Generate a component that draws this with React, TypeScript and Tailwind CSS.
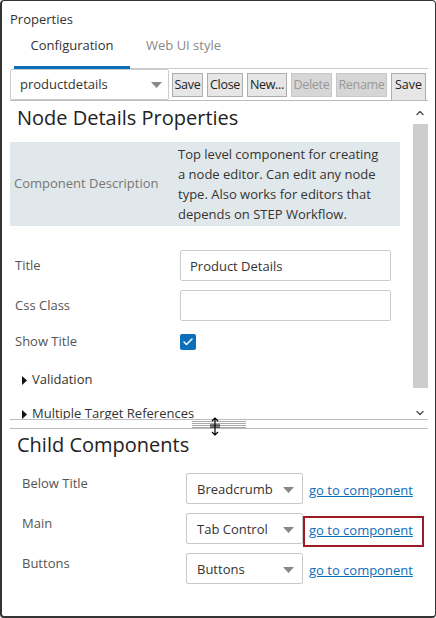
import { Check, ChevronDown, ChevronUp } from 'lucide-react'

const font = { fontFamily: '"Open Sans", "Noto Sans", sans-serif' }

function Caret() {
  return (
    <svg width="11" height="6" viewBox="0 0 11 6" className="shrink-0">
      <path d="M0 0 L11 0 L5.5 6 Z" fill="#888" />
    </svg>
  )
}

function ToolButton({ label, width, disabled }: { label: string; width: string; disabled?: boolean }) {
  return (
    <button
      className={
        (disabled
          ? 'border-[#c8c8c8] bg-[#d6d6d6] text-[#999] '
          : 'border-[#adadad] bg-[#e6e6e6] text-[#222] ') +
        width +
        ' h-[24px] border text-[12.5px] leading-[20px] whitespace-nowrap overflow-hidden tracking-[-0.3px] flex items-center justify-center'
      }
    >
      {label}
    </button>
  )
}

function ChildRow({ label, value, boxed }: { label: string; value: string; boxed?: boolean }) {
  return (
    <div className="flex items-start h-[40px]">
      <div className="w-[168px] pl-[4px] pt-[1px] text-[13px] text-[#555] leading-[18px]">{label}</div>
      <div className="w-[117px] h-[31px] border border-[#c8c8c8] rounded-[2px] bg-white flex items-center justify-between pl-[10px] pr-[8px] pt-[2px]">
        <span className="text-[13px] text-[#333]">{value}</span>
        <Caret />
      </div>
      <div
        className={
          boxed
            ? 'mt-[3px] h-[31px] w-[121px] border-2 border-[#9b1c25] flex items-center pl-[4px] pb-[3px]'
            : 'mt-[3px] h-[31px] w-[121px] border-2 border-transparent flex items-center pl-[4px] pb-[3px]'
        }
      >
        <a className="text-[13px] text-[#0a6eb8] underline leading-[16px]">go to component</a>
      </div>
    </div>
  )
}

export default function App() {
  return (
    <div className="w-[436px] h-[618px] bg-white" style={font}>
      <div className="w-full h-full border border-[#333] border-l-2 border-b-2 rounded-[4px] flex flex-col overflow-hidden">
        <div className="pl-[8px] pt-[9px] text-[13px] text-[#333] leading-[18px]">Properties</div>

        <div className="flex mt-[6px] pl-[12px]">
          <div className="w-[116px] h-[35px] flex items-start justify-center pt-[2px] text-[13px] text-[#333] border-b-[3px] border-[#0a6eb8]">
            Configuration
          </div>
          <div className="flex-1 h-[35px] flex items-start pt-[2px] pl-[16px] text-[13px] text-[#888] border-b border-[#ccc] mr-[7px]">
            Web UI style
          </div>
        </div>

        <div className="flex items-start h-[32px] ml-[8px] mr-[7px] border-b border-[#bbb] overflow-hidden">
          <div className="w-[159px] h-[31px] border border-[#ccc] rounded-[2px] flex items-center justify-between pl-[9px] pr-[6px] shrink-0">
            <span className="text-[13px] text-[#333]">productdetails</span>
            <Caret />
          </div>
          <div className="flex items-start gap-[4px] ml-[3px] mt-[4px]">
            <ToolButton label="Save" width="w-[31px]" />
            <ToolButton label="Close" width="w-[36px]" />
            <ToolButton label="New..." width="w-[40px]" />
            <ToolButton label="Delete" width="w-[41px]" disabled />
            <ToolButton label="Rename" width="w-[51px]" disabled />
            <button className="w-[35px] h-[44px] border border-[#adadad] bg-[#e6e6e6] text-[#222] text-[12.5px] leading-[20px] self-start">
              Save As
            </button>
          </div>
        </div>

        <div className="flex h-[318px] ml-[8px] mr-[7px]">
          <div className="flex-1 overflow-hidden">
            <div className="pl-[7px] pt-[3px] text-[20px] text-[#222] leading-[28px]">Node Details Properties</div>
            <div className="mt-[10px] w-[390px] h-[84px] bg-[#e1e8eb] flex items-center">
              <div className="w-[168px] pl-[4px] text-[13px] text-[#777]">Component Description</div>
              <div className="w-[205px] text-[13px] text-[#333] leading-[20px]">
                Top level component for creating a node editor. Can edit any node type. Also works for editors that depends on STEP Workflow.
              </div>
            </div>

            <div className="mt-[24px] flex items-center h-[31px]">
              <div className="w-[170px] pl-[5px] text-[13px] text-[#555]">Title</div>
              <div className="w-[211px] h-[31px] border border-[#ccc] rounded-[2px] flex items-center pl-[9px] pt-[2px] text-[13px] text-[#333]">
                Product Details
              </div>
            </div>
            <div className="mt-[9px] flex items-center h-[31px]">
              <div className="w-[170px] pl-[5px] text-[13px] text-[#555]">Css Class</div>
              <div className="w-[211px] h-[31px] border border-[#ccc] rounded-[2px]" />
            </div>
            <div className="mt-[12px] flex items-center h-[18px]">
              <div className="w-[170px] pl-[5px] text-[13px] text-[#555]">Show Title</div>
              <div className="w-[16px] h-[16px] rounded-[2px] bg-[#0a6eb8] flex items-center justify-center">
                <Check size={12} color="white" strokeWidth={3} />
              </div>
            </div>
            <div className="mt-[20px] flex items-center h-[18px] pl-[12px] text-[13px] text-[#333]">
              <svg width="5" height="9" viewBox="0 0 5 9" className="mr-[5px]">
                <path d="M0 0 L5 4.5 L0 9 Z" fill="#111" />
              </svg>
              Validation
            </div>
            <div className="mt-[16px] flex items-center h-[18px] pl-[12px] text-[13px] text-[#333]">
              <svg width="5" height="9" viewBox="0 0 5 9" className="mr-[5px]">
                <path d="M0 0 L5 4.5 L0 9 Z" fill="#111" />
              </svg>
              Multiple Target References
            </div>
          </div>
          <div className="w-[16px] flex flex-col items-center">
            <ChevronUp size={12} color="#555" strokeWidth={3} className="mt-[6px]" />
            <div className="w-[15px] h-[266px] bg-[#cdcdcd] mt-[5px]" />
            <ChevronDown size={12} color="#555" strokeWidth={3} className="mt-[19px]" />
          </div>
        </div>

        <div className="relative ml-[8px] mr-[7px] h-[10px] border-t border-b border-[#bbb]">
          <div className="absolute left-[182px] top-[1px] w-[54px] flex flex-col gap-[1px]">
            <div className="h-px bg-[#aaa]" />
            <div className="h-px bg-[#aaa]" />
            <div className="h-px bg-[#aaa]" />
            <div className="h-px bg-[#aaa]" />
          </div>
          <svg width="12" height="19" viewBox="0 0 12 19" className="absolute left-[199px] top-[-3px]">
            <path d="M6 1 L6 18 M3 4 L6 1 L9 4 M3 15 L6 18 L9 15 M1 8 L11 8 M1 10 L11 10" stroke="#000" strokeWidth="1.2" fill="none" />
          </svg>
        </div>

        <div className="pl-[15px] pt-[2px] text-[20px] text-[#222] leading-[28px]">Child Components</div>
        <div className="mt-[14px] pl-[16px] flex flex-col">
          <ChildRow label="Below Title" value="Breadcrumb" />
          <ChildRow label="Main" value="Tab Control" boxed />
          <ChildRow label="Buttons" value="Buttons" />
        </div>
      </div>
    </div>
  )
}
